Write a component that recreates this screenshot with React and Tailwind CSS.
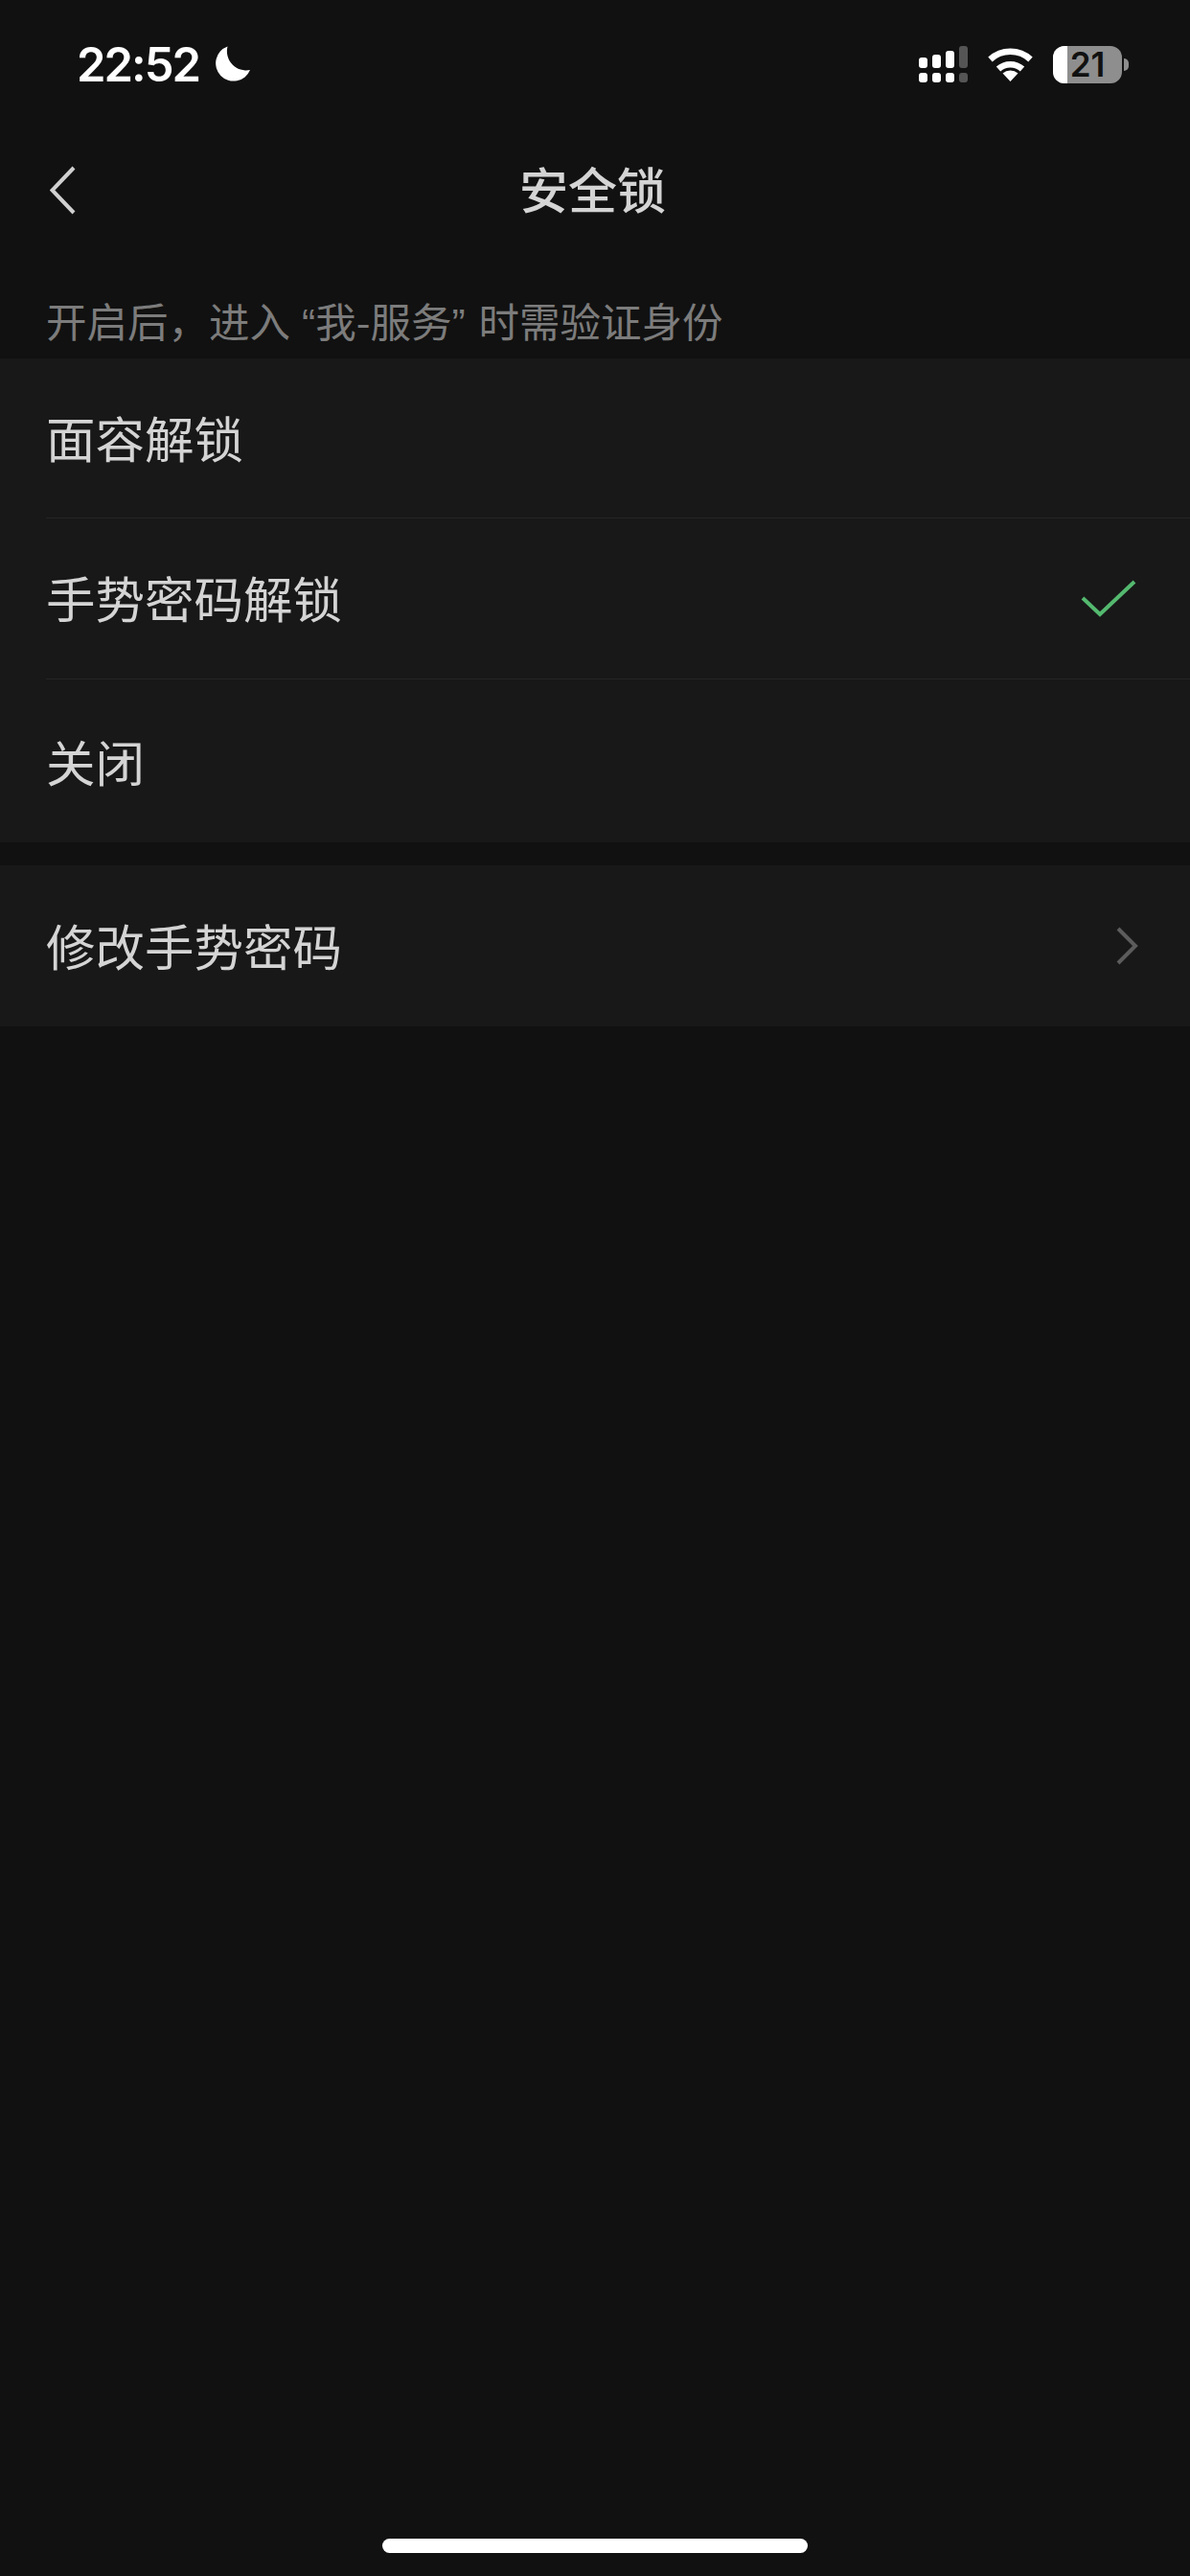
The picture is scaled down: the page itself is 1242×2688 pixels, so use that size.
import React from "react";

const rowFont = "font-['Noto_Sans_CJK_SC',sans-serif]";
const quoteFont = "font-['Liberation_Sans',sans-serif]";

function Moon() {
  return (
    <svg width="37" height="38" viewBox="0 0 37 38" fill="#fff">
      <path d="M13.5 0.5 A18.6 18.6 0 1 0 37 25 A20 20 0 0 1 13.5 0.5 Z" />
    </svg>
  );
}

function Signal() {
  const bars = [
    { x: 0, top: 12, color: "#fff" },
    { x: 14, top: 9, color: "#fff" },
    { x: 28, top: 5, color: "#fff" },
    { x: 42, top: 0, color: "#555" },
  ];
  return (
    <svg width="51" height="38" viewBox="0 0 51 38">
      {bars.map((b) => (
        <g key={b.x} fill={b.color}>
          <rect x={b.x} y={b.top} width="9" height={23 - b.top} rx="3" />
          <rect x={b.x} y="28" width="9" height="10" rx="3" />
        </g>
      ))}
    </svg>
  );
}

function Wifi() {
  return (
    <svg width="47" height="36" viewBox="0 0 47 36" fill="none">
      <path d="M2.5 13 A31 31 0 0 1 44.5 13" stroke="#fff" strokeWidth="6.5" />
      <path d="M11 23 A18.5 18.5 0 0 1 36 23" stroke="#fff" strokeWidth="6.5" />
      <path d="M23.5 36 L15.5 27.5 A12 12 0 0 1 31.5 27.5 Z" fill="#fff" />
    </svg>
  );
}

function Battery() {
  return (
    <div className="flex items-center gap-[2px]">
      <div className="relative h-[39px] w-[72px]">
        <div className="flex h-full overflow-hidden rounded-[12px] bg-[#8e8e8e]">
          <div className="h-full w-[15px] bg-white" />
        </div>
        <span className="absolute inset-0 flex items-center justify-center font-['Inter',sans-serif] text-[35px] font-semibold leading-none text-[#111111]">
          21
        </span>
      </div>
      <div className="h-[13px] w-[5px] rounded-r-full bg-[#8e8e8e]" />
    </div>
  );
}

function Row({ label, right, divider, height, labelPad = "" }) {
  return (
    <div className="pl-12">
      <div
        className={`flex items-center justify-between pr-12 ${height} ${
          divider ? "border-b border-[#252525]" : ""
        }`}
      >
        <span className={`${rowFont} ${labelPad} text-[51.5px] leading-none text-[#d4d4d4]`}>
          {label}
        </span>
        {right}
      </div>
    </div>
  );
}

export default function App() {
  return (
    <div className="flex h-[2688px] w-[1242px] flex-col overflow-hidden bg-[#111111]">
      <div className="flex h-[134px] items-center justify-between pl-[80px] pr-[64px]">
        <div className="flex items-center gap-[16px]">
          <span className="font-['Inter',sans-serif] text-[49px] font-semibold leading-none tracking-[-2px] text-white">
            22:52
          </span>
          <Moon />
        </div>
        <div className="flex items-center gap-[21px]">
          <Signal />
          <Wifi />
          <Battery />
        </div>
      </div>

      <div className="grid h-[128px] grid-cols-[1fr_auto_1fr] items-center pl-[52px] pr-[57px]">
        <svg width="27" height="51" viewBox="0 0 27 51" fill="none">
          <path d="M25 2 L2.5 25.5 L25 49" stroke="#d0d0d0" strokeWidth="4" />
        </svg>
        <span className={`${rowFont} pb-[4px] text-[51px] font-medium leading-none text-[#d4d4d4]`}>
          安全锁
        </span>
      </div>

      <div className="flex h-[112px] items-end pb-[6px] pl-12">
        <span className={`${rowFont} text-[42.5px] leading-[60px] text-[#7c7c7c]`}>
          开启后，进入<span className={`${quoteFont} ml-[12px]`}>“</span>我-服务<span className={`${quoteFont} mr-[14px]`}>”</span>时需验证身份
        </span>
      </div>

      <div className="bg-[#181818]">
        <Row label="面容解锁" divider height="h-[167px]" labelPad="pb-[3px]" />
        <Row
          label="手势密码解锁"
          divider
          height="h-[168px]"
          labelPad="pb-[3px]"
          right={
            <svg width="58" height="40" viewBox="0 0 58 40" fill="none" className="mr-[8px]">
              <path d="M2 19 L20 36 L56 2" stroke="#54b96f" strokeWidth="4" />
            </svg>
          }
        />
        <Row label="关闭" height="h-[170px]" />
      </div>

      <div className="mt-6 bg-[#181818]">
        <Row
          label="修改手势密码"
          height="h-[168px]"
          labelPad="pb-[2px]"
          right={
            <svg width="24" height="40" viewBox="0 0 24 40" fill="none" className="mr-[5px]">
              <path d="M2 2 L20 20 L2 38" stroke="#5c5c5c" strokeWidth="4" />
            </svg>
          }
        />
      </div>

      <div className="mb-6 mt-auto flex justify-center">
        <div className="h-[15px] w-[444px] rounded-full bg-white" />
      </div>
    </div>
  );
}
